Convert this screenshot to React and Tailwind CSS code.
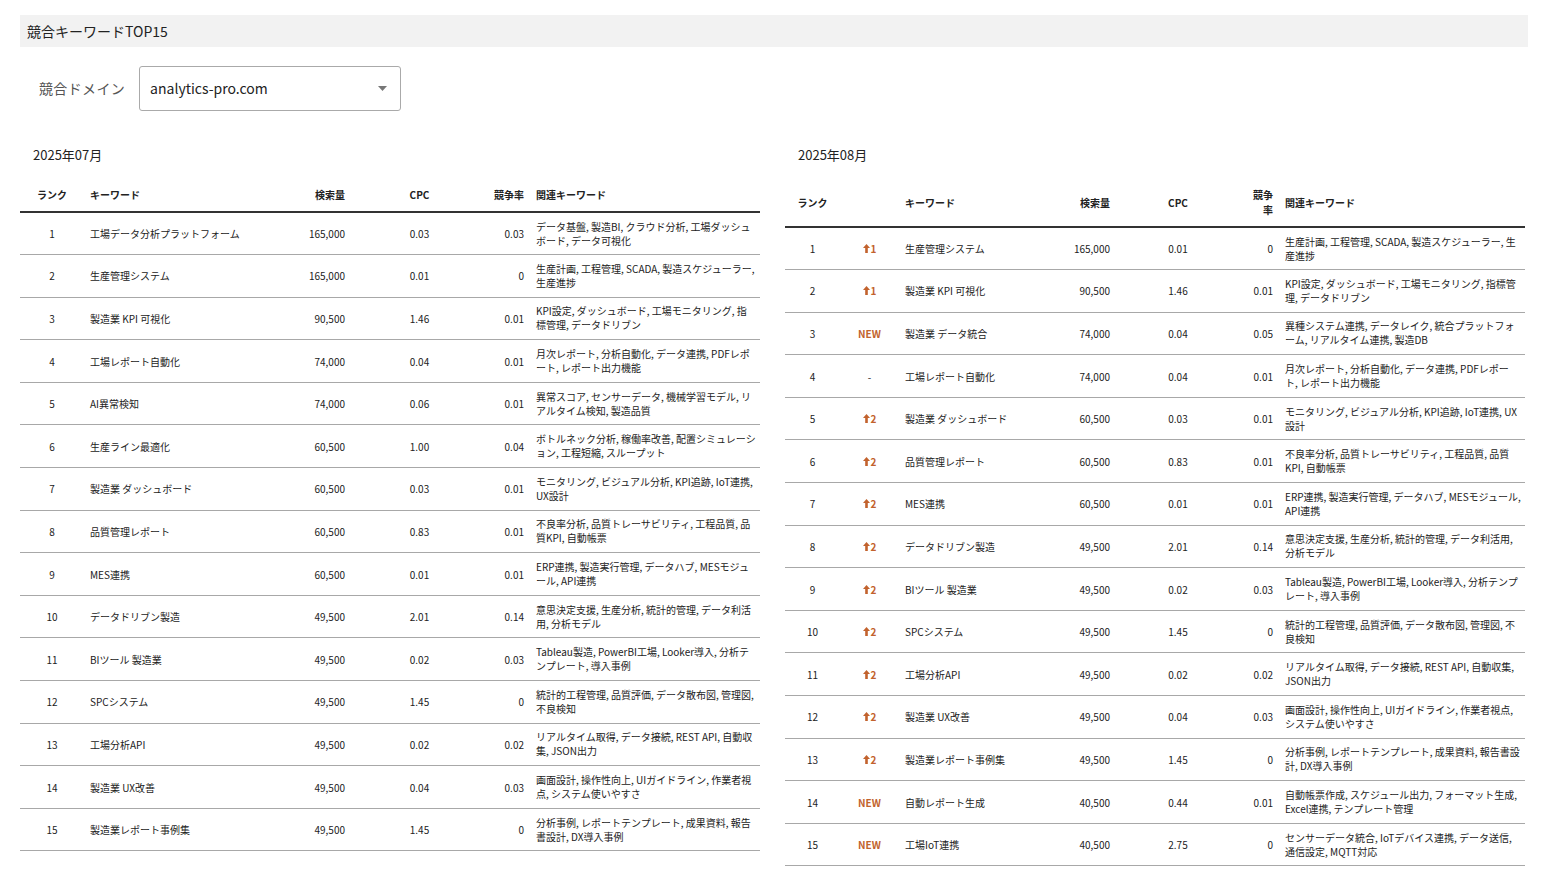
import React from 'react';

const font = { fontFamily: '"Noto Sans CJK JP", "Noto Sans", sans-serif' };

const july = [
  [1, '工場データ分析プラットフォーム', '165,000', '0.03', '0.03', 'データ基盤, 製造BI, クラウド分析, 工場ダッシュボード, データ可視化'],
  [2, '生産管理システム', '165,000', '0.01', '0', '生産計画, 工程管理, SCADA, 製造スケジューラー, 生産進捗'],
  [3, '製造業 KPI 可視化', '90,500', '1.46', '0.01', 'KPI設定, ダッシュボード, 工場モニタリング, 指標管理, データドリブン'],
  [4, '工場レポート自動化', '74,000', '0.04', '0.01', '月次レポート, 分析自動化, データ連携, PDFレポート, レポート出力機能'],
  [5, 'AI異常検知', '74,000', '0.06', '0.01', '異常スコア, センサーデータ, 機械学習モデル, リアルタイム検知, 製造品質'],
  [6, '生産ライン最適化', '60,500', '1.00', '0.04', 'ボトルネック分析, 稼働率改善, 配置シミュレーション, 工程短縮, スループット'],
  [7, '製造業 ダッシュボード', '60,500', '0.03', '0.01', 'モニタリング, ビジュアル分析, KPI追跡, IoT連携, UX設計'],
  [8, '品質管理レポート', '60,500', '0.83', '0.01', '不良率分析, 品質トレーサビリティ, 工程品質, 品質KPI, 自動帳票'],
  [9, 'MES連携', '60,500', '0.01', '0.01', 'ERP連携, 製造実行管理, データハブ, MESモジュール, API連携'],
  [10, 'データドリブン製造', '49,500', '2.01', '0.14', '意思決定支援, 生産分析, 統計的管理, データ利活用, 分析モデル'],
  [11, 'BIツール 製造業', '49,500', '0.02', '0.03', 'Tableau製造, PowerBI工場, Looker導入, 分析テンプレート, 導入事例'],
  [12, 'SPCシステム', '49,500', '1.45', '0', '統計的工程管理, 品質評価, データ散布図, 管理図, 不良検知'],
  [13, '工場分析API', '49,500', '0.02', '0.02', 'リアルタイム取得, データ接続, REST API, 自動収集, JSON出力'],
  [14, '製造業 UX改善', '49,500', '0.04', '0.03', '画面設計, 操作性向上, UIガイドライン, 作業者視点, システム使いやすさ'],
  [15, '製造業レポート事例集', '49,500', '1.45', '0', '分析事例, レポートテンプレート, 成果資料, 報告書設計, DX導入事例'],
];

const aug = [
  [1, '1', '生産管理システム', '165,000', '0.01', '0', '生産計画, 工程管理, SCADA, 製造スケジューラー, 生産進捗'],
  [2, '1', '製造業 KPI 可視化', '90,500', '1.46', '0.01', 'KPI設定, ダッシュボード, 工場モニタリング, 指標管理, データドリブン'],
  [3, 'NEW', '製造業 データ統合', '74,000', '0.04', '0.05', '異種システム連携, データレイク, 統合プラットフォーム, リアルタイム連携, 製造DB'],
  [4, '-', '工場レポート自動化', '74,000', '0.04', '0.01', '月次レポート, 分析自動化, データ連携, PDFレポート, レポート出力機能'],
  [5, '2', '製造業 ダッシュボード', '60,500', '0.03', '0.01', 'モニタリング, ビジュアル分析, KPI追跡, IoT連携, UX設計'],
  [6, '2', '品質管理レポート', '60,500', '0.83', '0.01', '不良率分析, 品質トレーサビリティ, 工程品質, 品質KPI, 自動帳票'],
  [7, '2', 'MES連携', '60,500', '0.01', '0.01', 'ERP連携, 製造実行管理, データハブ, MESモジュール, API連携'],
  [8, '2', 'データドリブン製造', '49,500', '2.01', '0.14', '意思決定支援, 生産分析, 統計的管理, データ利活用, 分析モデル'],
  [9, '2', 'BIツール 製造業', '49,500', '0.02', '0.03', 'Tableau製造, PowerBI工場, Looker導入, 分析テンプレート, 導入事例'],
  [10, '2', 'SPCシステム', '49,500', '1.45', '0', '統計的工程管理, 品質評価, データ散布図, 管理図, 不良検知'],
  [11, '2', '工場分析API', '49,500', '0.02', '0.02', 'リアルタイム取得, データ接続, REST API, 自動収集, JSON出力'],
  [12, '2', '製造業 UX改善', '49,500', '0.04', '0.03', '画面設計, 操作性向上, UIガイドライン, 作業者視点, システム使いやすさ'],
  [13, '2', '製造業レポート事例集', '49,500', '1.45', '0', '分析事例, レポートテンプレート, 成果資料, 報告書設計, DX導入事例'],
  [14, 'NEW', '自動レポート生成', '40,500', '0.44', '0.01', '自動帳票作成, スケジュール出力, フォーマット生成, Excel連携, テンプレート管理'],
  [15, 'NEW', '工場IoT連携', '40,500', '2.75', '0', 'センサーデータ統合, IoTデバイス連携, データ送信, 通信設定, MQTT対応'],
];

const Change = ({ v }) => {
  if (v === '-') return <span>-</span>;
  if (v === 'NEW') return <span className="font-bold text-[#c2622d]">NEW</span>;
  return (
    <span className="inline-flex items-center font-bold text-[#c2622d]">
      <svg width="7" height="9" viewBox="0 0 7 9" className="mr-px">
        <path d="M3.5 0 L7 4 L4.8 4 L4.8 9 L2.2 9 L2.2 4 L0 4 Z" fill="#c2622d" />
      </svg>
      {v}
    </span>
  );
};

const th = 'px-[6px] pb-[9px] font-bold text-[10px]';
const td = 'px-[6px] h-[42.6px] border-b border-[#a8a8a8] text-[10px]';

const JulyTable = () => (
  <table className="table-fixed border-collapse w-[740px] text-[#222]">
    <colgroup>
      <col className="w-[64px]" /><col className="w-[206px]" /><col className="w-[61px]" />
      <col className="w-[137px]" /><col className="w-[42px]" /><col className="w-[230px]" />
    </colgroup>
    <thead>
      <tr className="border-b-2 border-[#333]">
        <th className={th + ' text-center'}>ランク</th>
        <th className={th + ' text-left'}>キーワード</th>
        <th className={th + ' text-right'}>検索量</th>
        <th className={th + ' text-center'}>CPC</th>
        <th className={th + ' text-right'}>競争率</th>
        <th className={th + ' text-left'}>関連キーワード</th>
      </tr>
    </thead>
    <tbody>
      {july.map((r) => (
        <tr key={r[0]}>
          <td className={td + ' text-center'}>{r[0]}</td>
          <td className={td}>{r[1]}</td>
          <td className={td + ' text-right'}>{r[2]}</td>
          <td className={td + ' text-center'}>{r[3]}</td>
          <td className={td + ' text-right'}>{r[4]}</td>
          <td className={td + ' leading-[14px] pr-[4px]'}>{r[5]}</td>
        </tr>
      ))}
    </tbody>
  </table>
);

const AugTable = () => (
  <table className="table-fixed border-collapse w-[740px] text-[#222]">
    <colgroup>
      <col className="w-[55px]" /><col className="w-[59px]" /><col className="w-[151px]" />
      <col className="w-[66px]" /><col className="w-[124px]" /><col className="w-[39px]" /><col className="w-[246px]" />
    </colgroup>
    <thead>
      <tr className="border-b-2 border-[#333]">
        <th className={th + ' text-center'}>ランク</th>
        <th className={th}></th>
        <th className={th + ' text-left'}>キーワード</th>
        <th className={th + ' text-right'}>検索量</th>
        <th className={th + ' text-center'}>CPC</th>
        <th className={th + ' text-right'}>競争率</th>
        <th className={th + ' text-left'}>関連キーワード</th>
      </tr>
    </thead>
    <tbody>
      {aug.map((r) => (
        <tr key={r[0]}>
          <td className={td + ' text-center'}>{r[0]}</td>
          <td className={td + ' text-center'}><Change v={r[1]} /></td>
          <td className={td}>{r[2]}</td>
          <td className={td + ' text-right'}>{r[3]}</td>
          <td className={td + ' text-center'}>{r[4]}</td>
          <td className={td + ' text-right'}>{r[5]}</td>
          <td className={td + ' leading-[14px] pr-[4px]'}>{r[6]}</td>
        </tr>
      ))}
    </tbody>
  </table>
);

export default function App() {
  return (
    <div className="bg-white min-h-screen px-[20px] pt-[15px] text-[#222]" style={font}>
      <div className="bg-[#f2f2f2] h-[32px] flex items-center px-[7px] text-[14px]">競合キーワードTOP15</div>
      <div className="flex items-center mt-[19px] ml-[19px]">
        <span className="text-[14px] text-[#555] tracking-wide">競合ドメイン</span>
        <div className="ml-[14px] w-[262px] h-[45px] border border-[#aaa] rounded-[3px] flex items-center justify-between pl-[10px] pr-[13px] text-[14px]">
          <span>analytics-pro.com</span>
          <svg width="9" height="5" viewBox="0 0 9 5"><path d="M0 0 L9 0 L4.5 5 Z" fill="#777" /></svg>
        </div>
      </div>
      <div className="flex gap-[25px] mt-[34px]">
        <div>
          <div className="text-[13px] ml-[13px] h-[20px] leading-[20px]">2025年07月</div>
          <div className="mt-[22px]"><JulyTable /></div>
        </div>
        <div>
          <div className="text-[13px] ml-[13px] h-[20px] leading-[20px]">2025年08月</div>
          <div className="mt-[22px]"><AugTable /></div>
        </div>
      </div>
    </div>
  );
}
